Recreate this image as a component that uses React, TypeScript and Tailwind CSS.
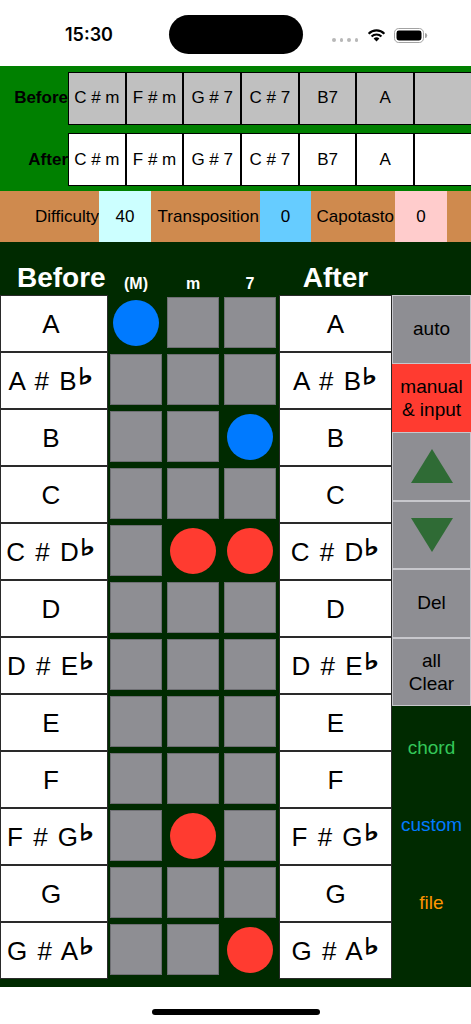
import React from "react";

const notes: [string, string | null][] = [
  ["A", null],
  ["A # B", "♭"],
  ["B", null],
  ["C", null],
  ["C # D", "♭"],
  ["D", null],
  ["D # E", "♭"],
  ["E", null],
  ["F", null],
  ["F # G", "♭"],
  ["G", null],
  ["G # A", "♭"],
];

const marks: Record<string, string> = {
  "0-0": "bg-[#007aff]",
  "2-2": "bg-[#007aff]",
  "4-1": "bg-[#ff3b30]",
  "4-2": "bg-[#ff3b30]",
  "9-1": "bg-[#ff3b30]",
  "11-2": "bg-[#ff3b30]",
};

const chords = ["C # m", "F # m", "G # 7", "C # 7", "B7", "A", ""];

function NoteLabel({ n }: { n: [string, string | null] }) {
  return (
    <span className="text-[26px] leading-none text-black [word-spacing:3px] whitespace-nowrap">
      {n[0]}
      {n[1] && (
        <span className="relative top-[-6px] inline-block ml-[1px] mr-[5px] text-[23px] font-['DejaVu_Sans',sans-serif] scale-x-[1.4] origin-left [-webkit-text-stroke:0.9px_black]">
          {n[1]}
        </span>
      )}
    </span>
  );
}

function Wifi() {
  return (
    <svg width="21" height="15" viewBox="0 0 21 15" fill="#000">
      <path d="M10.5 14.6 L7.6 11.6 A4.2 4.2 0 0 1 13.4 11.6 Z" />
      <path d="M4.8 8.8 A8.1 8.1 0 0 1 16.2 8.8 L14.7 10.3 A6 6 0 0 0 6.3 10.3 Z" />
      <path d="M1.9 5.9 A12.2 12.2 0 0 1 19.1 5.9 L17.6 7.4 A10.1 10.1 0 0 0 3.4 7.4 Z" />
    </svg>
  );
}

function Battery() {
  return (
    <svg width="34" height="15" viewBox="0 0 34 15">
      <rect x="0.5" y="0.5" width="29" height="14" rx="4.2" fill="none" stroke="#a3a3a3" />
      <rect x="2.5" y="2.5" width="25" height="10" rx="2.4" fill="#000" />
      <path d="M31 5 v5 a2.2 2.5 0 0 0 0 -5z" fill="#a3a3a3" />
    </svg>
  );
}

export default function App() {
  return (
    <div className="relative w-[471px] h-[1024px] overflow-hidden bg-white font-['Liberation_Sans',Arial,sans-serif]">
      {/* Status bar */}
      <div className="relative h-[66px] flex items-center">
        <div className="ml-[65px] mt-[4px] w-[50px] text-[18px] font-semibold font-['Inter',sans-serif] text-black leading-none">
          15:30
        </div>
        <div className="absolute left-[169px] top-[15px] w-[134px] h-[39px] rounded-full bg-black" />
        <div className="ml-auto mr-[43px] mt-[4px] flex items-center">
          <div className="flex gap-[4px] mt-[10px]">
            <div className="w-[3.5px] h-[3.5px] rounded-full bg-[#b8b8b8]" />
            <div className="w-[3.5px] h-[3.5px] rounded-full bg-[#b8b8b8]" />
            <div className="w-[3.5px] h-[3.5px] rounded-full bg-[#b8b8b8]" />
            <div className="w-[3.5px] h-[3.5px] rounded-full bg-[#b8b8b8]" />
          </div>
          <div className="ml-[8px] mt-[-1px]">
            <Wifi />
          </div>
          <div className="ml-[7px]">
            <Battery />
          </div>
        </div>
      </div>

      {/* Green chord rows */}
      <div className="h-[125px] bg-[#008000] pt-[5.5px]">
        <div className="flex h-[53px] overflow-hidden">
          <div className="w-[68px] shrink-0 flex items-center justify-end text-[17px] font-bold text-black">
            Before
          </div>
          {chords.map((c, i) => (
            <div
              key={i}
              className="w-[57.7px] shrink-0 h-[53px] border border-black bg-[#c0c0c0] flex items-center justify-center text-[17px] text-black"
            >
              {c}
            </div>
          ))}
        </div>
        <div className="flex h-[53px] mt-[8.5px] overflow-hidden">
          <div className="w-[68px] shrink-0 flex items-center justify-end text-[17px] font-bold text-black">
            After
          </div>
          {chords.map((c, i) => (
            <div
              key={i}
              className="w-[57.7px] shrink-0 h-[53px] border border-black bg-white flex items-center justify-center text-[17px] text-black"
            >
              {c}
            </div>
          ))}
        </div>
      </div>

      {/* Orange settings row */}
      <div className="h-[51px] bg-[#cf8a4e] flex text-[17px] text-black">
        <div className="w-[99px] flex items-center justify-end">Difficulty</div>
        <div className="w-[52px] bg-[#ccffff] flex items-center justify-center">40</div>
        <div className="w-[109px] flex items-center justify-end pr-[1px]">Transposition</div>
        <div className="w-[51px] bg-[#66ccff] flex items-center justify-center">0</div>
        <div className="w-[84px] flex items-center justify-end pr-[1px]">Capotasto</div>
        <div className="w-[52px] bg-[#ffcccc] flex items-center justify-center">0</div>
      </div>

      {/* Dark green main */}
      <div className="h-[745px] bg-[#002a00]">
        {/* Header */}
        <div className="h-[53px] flex items-end pb-[3px] text-white font-bold">
          <div className="w-[108px] pl-[17px] text-[28px] leading-none">Before</div>
          <div className="w-[171px] flex pl-[2px] gap-[5px] text-[16px] leading-none">
            <div className="w-[52px] text-center">(M)</div>
            <div className="w-[52px] text-center">m</div>
            <div className="w-[52px] text-center">7</div>
          </div>
          <div className="w-[113px] text-center text-[28px] leading-none">After</div>
        </div>

        {/* Grid */}
        <div className="flex">
          <div className="w-[108px] flex flex-col">
            {notes.map((n, i) => (
              <div
                key={i}
                className="h-[57px] bg-white border border-[#2a2a2a] pr-[6px] flex items-center justify-center"
              >
                <NoteLabel n={n} />
              </div>
            ))}
          </div>
          <div className="w-[171px] flex flex-col">
            {notes.map((_, r) => (
              <div key={r} className="h-[57px] flex pl-[2px] pt-[2px] gap-[5px]">
                {[0, 1, 2].map((c) => {
                  const m = marks[`${r}-${c}`];
                  return m ? (
                    <div key={c} className="w-[52px] h-[51px] flex items-center justify-center">
                      <div className={`w-[46px] h-[46px] rounded-full ${m}`} />
                    </div>
                  ) : (
                    <div
                      key={c}
                      className="w-[52px] h-[51px] bg-[#8e8e93] border border-[#6e6e73]"
                    />
                  );
                })}
              </div>
            ))}
          </div>
          <div className="w-[113px] flex flex-col">
            {notes.map((n, i) => (
              <div
                key={i}
                className="h-[57px] bg-white border border-[#2a2a2a] flex items-center justify-center"
              >
                <NoteLabel n={n} />
              </div>
            ))}
          </div>
          <div className="w-[79px] flex flex-col text-[19px] text-black">
            <div className="h-[68.5px] bg-[#8e8e93] border border-[#c7c7cc] flex items-center justify-center">
              auto
            </div>
            <div className="h-[68.5px] bg-[#ff3b30] flex flex-col items-center justify-center leading-[23px]">
              <span>manual</span>
              <span>&amp; input</span>
            </div>
            <div className="h-[68.5px] bg-[#8e8e93] border border-[#c7c7cc] flex items-center justify-center">
              <svg width="42" height="34" viewBox="0 0 42 34">
                <path d="M21 0 L42 34 L0 34 Z" fill="#2f6b35" />
              </svg>
            </div>
            <div className="h-[68.5px] bg-[#8e8e93] border border-[#c7c7cc] flex items-center justify-center">
              <svg width="42" height="34" viewBox="0 0 42 34">
                <path d="M0 0 L42 0 L21 34 Z" fill="#2f6b35" />
              </svg>
            </div>
            <div className="h-[68.5px] bg-[#8e8e93] border border-[#c7c7cc] flex items-center justify-center">
              Del
            </div>
            <div className="h-[68.5px] bg-[#8e8e93] border border-[#c7c7cc] flex flex-col items-center justify-center leading-[23px]">
              <span>all</span>
              <span>Clear</span>
            </div>
            <div className="pt-[3px] flex flex-col">
              <div className="h-[77.5px] flex items-center justify-center text-[#34c759]">chord</div>
              <div className="h-[77.5px] flex items-center justify-center text-[#007aff]">custom</div>
              <div className="h-[77.5px] flex items-center justify-center text-[#ff9500]">file</div>
            </div>
          </div>
        </div>
      </div>

      {/* Home indicator */}
      <div className="flex justify-center mt-[22px]">
        <div className="w-[168px] h-[5.5px] rounded-full bg-black" />
      </div>
    </div>
  );
}
